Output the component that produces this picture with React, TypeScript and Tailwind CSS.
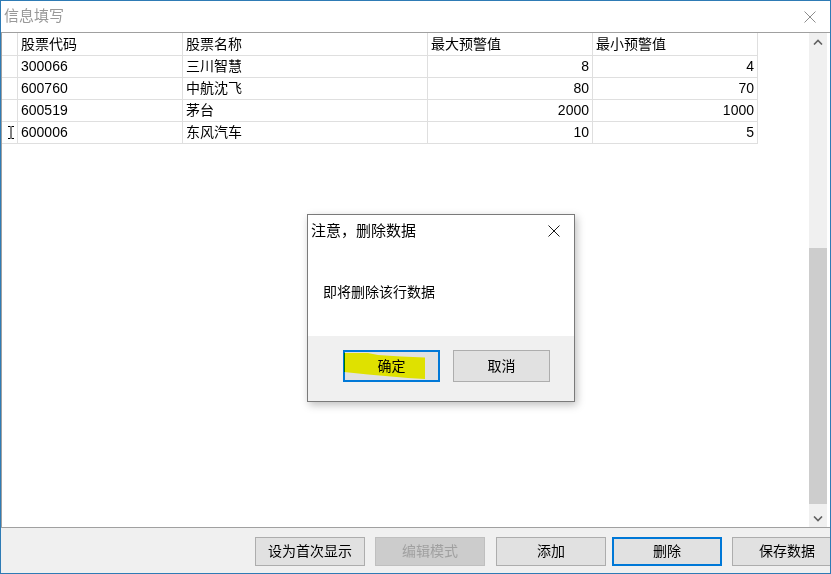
import React from 'react';

const rows = [
  { code: '300066', name: '三川智慧', max: '8', min: '4' },
  { code: '600760', name: '中航沈飞', max: '80', min: '70' },
  { code: '600519', name: '茅台', max: '2000', min: '1000' },
  { code: '600006', name: '东风汽车', max: '10', min: '5', cursor: true },
];

function IBeam() {
  return (
    <svg width="8" height="13" viewBox="0 0 8 13" className="block">
      <path d="M1 0.5h2.5M4.5 0.5h2.5M1 12.5h2.5M4.5 12.5h2.5M4 1v11" stroke="#000" strokeWidth="1" fill="none" />
    </svg>
  );
}

function Chevron({ up }: { up?: boolean }) {
  return (
    <svg width="10" height="6" viewBox="0 0 10 6" className="block">
      <path d={up ? 'M1 5.5L5 1.5L9 5.5' : 'M1 0.5L5 4.5L9 0.5'} stroke="#606060" strokeWidth="1.6" fill="none" />
    </svg>
  );
}

function CloseX({ size, color }: { size: number; color: string }) {
  return (
    <svg width={size} height={size} viewBox={`0 0 ${size} ${size}`} className="block">
      <path d={`M0.5 0.5L${size - 0.5} ${size - 0.5}M${size - 0.5} 0.5L0.5 ${size - 0.5}`} stroke={color} strokeWidth="1" fill="none" />
    </svg>
  );
}

function ToolButton({ label, ml, variant }: { label: string; ml: string; variant?: 'disabled' | 'default' }) {
  const look =
    variant === 'disabled'
      ? 'bg-[#cccccc] border border-[#bfbfbf] text-[#a0a0a0]'
      : variant === 'default'
      ? 'bg-[#e1e1e1] border-2 border-[#0078d7] text-black'
      : 'bg-[#e1e1e1] border border-[#adadad] text-black';
  return (
    <div className={`${ml} w-[110px] h-[29px] shrink-0 flex items-center justify-center text-[14px] ${look}`}>
      {label}
    </div>
  );
}

export default function App() {
  return (
    <div className="relative w-[831px] h-[574px] overflow-hidden bg-white border border-[#2e7bb5] flex flex-col font-['Liberation_Sans','Noto_Sans_CJK_SC',sans-serif] text-black">
      {/* 标题栏 */}
      <div className="h-[31px] flex items-center justify-between pl-[3px] pr-[14px] shrink-0">
        <span className="text-[15px] text-[#999999]">信息填写</span>
        <CloseX size={12} color="#8c8c8c" />
      </div>

      {/* 表格 */}
      <div className="h-[496px] shrink-0 border-y border-l border-[#a0a0a0] flex">
        <div className="flex-1">
          <div className="w-[756px] flex h-[23px] border-b border-[#dfdfdf] text-[14px]">
            <div className="w-[16px] border-r border-[#dfdfdf]" />
            <div className="w-[165px] border-r border-[#dfdfdf] pl-[3px] flex items-center">股票代码</div>
            <div className="w-[245px] border-r border-[#dfdfdf] pl-[3px] flex items-center">股票名称</div>
            <div className="w-[165px] border-r border-[#dfdfdf] pl-[3px] flex items-center">最大预警值</div>
            <div className="w-[165px] border-r border-[#dfdfdf] pl-[3px] flex items-center">最小预警值</div>
          </div>
          {rows.map((r) => (
            <div key={r.code} className="w-[756px] flex h-[22px] border-b border-[#dfdfdf] text-[14px]">
              <div className="w-[16px] border-r border-[#dfdfdf] flex items-center pl-[5px]">
                {r.cursor && <IBeam />}
              </div>
              <div className="w-[165px] border-r border-[#dfdfdf] pl-[3px] flex items-center">{r.code}</div>
              <div className="w-[245px] border-r border-[#dfdfdf] pl-[3px] flex items-center">{r.name}</div>
              <div className="w-[165px] border-r border-[#dfdfdf] pr-[3px] flex items-center justify-end">{r.max}</div>
              <div className="w-[165px] border-r border-[#dfdfdf] pr-[3px] flex items-center justify-end">{r.min}</div>
            </div>
          ))}
        </div>

        {/* 滚动条 */}
        <div className="w-[18px] mr-[3px] bg-[#f0f0f0] flex flex-col">
          <div className="h-[17px] flex items-center justify-center">
            <Chevron up />
          </div>
          <div className="mt-[198px] h-[256px] bg-[#cdcdcd]" />
          <div className="flex-1" />
          <div className="h-[17px] flex items-center justify-center">
            <Chevron />
          </div>
        </div>
      </div>

      {/* 按钮栏 */}
      <div className="flex-1 bg-[#f0f0f0] flex items-start pt-[9px] pl-[254px]">
        <ToolButton label="设为首次显示" ml="ml-0" />
        <ToolButton label="编辑模式" ml="ml-[10px]" variant="disabled" />
        <ToolButton label="添加" ml="ml-[11px]" />
        <ToolButton label="删除" ml="ml-[6px]" variant="default" />
        <ToolButton label="保存数据" ml="ml-[10px]" />
      </div>

      {/* 确认对话框 */}
      <div className="absolute left-[306px] top-[213px] w-[268px] h-[188px] border border-[#7a7a7a] bg-white flex flex-col shadow-[2px_3px_8px_rgba(0,0,0,0.25)]">
        <div className="h-[32px] flex items-center justify-between pl-[3px] pr-[14px] shrink-0">
          <span className="text-[15px]">注意，删除数据</span>
          <CloseX size={12} color="#1a1a1a" />
        </div>
        <div className="h-[89px] shrink-0 pl-[15px] pt-[35px] text-[14px] leading-[20px]">即将删除该行数据</div>
        <div className="flex-1 bg-[#f0f0f0] flex items-start pt-[14px] pl-[35px] gap-[13px]">
          <div className="relative w-[97px] h-[32px] bg-[#e1e1e1] border-2 border-[#0078d7] flex items-center justify-center text-[14px]">
            确定
          </div>
          <div className="w-[97px] h-[32px] bg-[#e1e1e1] border border-[#adadad] flex items-center justify-center text-[14px]">
            取消
          </div>
        </div>
      </div>

      {/* 荧光笔标记 */}
      <svg className="absolute left-0 top-0 mix-blend-multiply pointer-events-none" width="831" height="574">
        <polygon
          points="343,352 367,352 377,354 400,355.5 424,356.5 424,378 407,377 367,373.5 343,371"
          fill="#fdff00"
        />
      </svg>
    </div>
  );
}
